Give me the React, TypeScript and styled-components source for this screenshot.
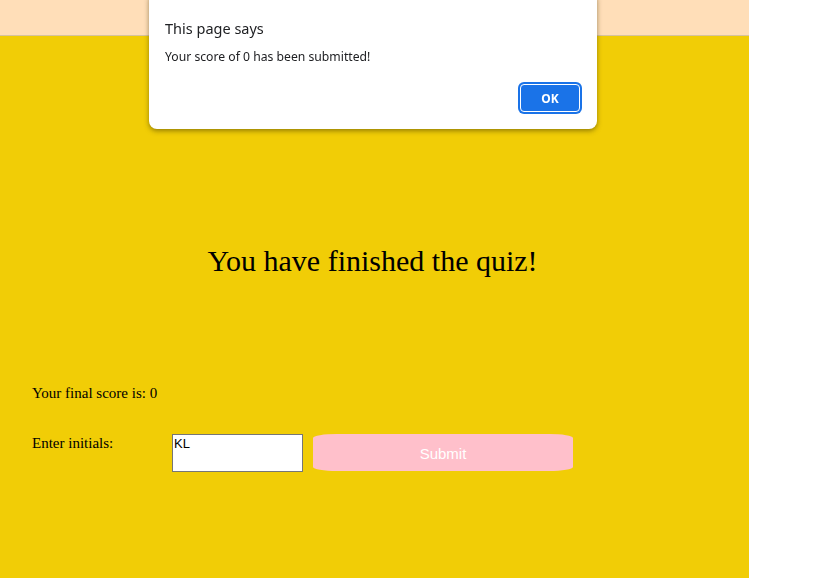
import React from "react";
import styled, { createGlobalStyle } from "styled-components";

const GlobalStyle = createGlobalStyle`
  html, body { margin: 0; padding: 0; background: #ffffff; }
  body { font-family: "Liberation Serif", "Times New Roman", serif; }
`;

const Page = styled.div`
  width: 749px;
  height: 578px;
  display: flex;
  flex-direction: column;
  overflow: hidden;
`;

const Header = styled.header`
  height: 35px;
  flex: none;
  background: #ffdeb8;
  border-bottom: 1px solid #d6c39e;
`;

const Main = styled.main`
  flex: 1;
  background: #f1cd06;
  display: flex;
  flex-direction: column;
  padding: 0 36px 0 32px;
`;

const Title = styled.h1`
  margin: 207px 0 0;
  font-size: 30px;
  font-weight: normal;
  text-align: center;
  color: #000;
  line-height: 36px;
`;

const Score = styled.p`
  margin: 105px 0 0;
  font-size: 15px;
  line-height: 18px;
  color: #000;
`;

const FormRow = styled.form`
  margin-top: 32px;
  display: flex;
  align-items: flex-start;
`;

const Label = styled.label`
  width: 140px;
  font-size: 15px;
  line-height: 18px;
  color: #000;
`;

const Initials = styled.textarea`
  box-sizing: border-box;
  width: 131px;
  height: 38px;
  margin: 0;
  padding: 1px 1px;
  border: 1px solid #767676;
  background: #fff;
  font-family: "Liberation Sans", Arial, sans-serif;
  font-size: 13px;
  line-height: 15px;
  color: #000;
  resize: none;
  outline: none;
`;

const SubmitButton = styled.button`
  box-sizing: border-box;
  width: 260px;
  height: 37px;
  margin-left: 10px;
  border: none;
  background: #ffc0cb;
  color: #ffffff;
  font-family: "Liberation Sans", Arial, sans-serif;
  font-size: 15px;
  border-radius: 24px / 4px;
  padding: 2px 0 0;
  cursor: pointer;
`;

const Dialog = styled.div`
  position: fixed;
  top: -8px;
  left: 149px;
  width: 448px;
  height: 137px;
  box-sizing: border-box;
  background: #ffffff;
  border-radius: 8px;
  box-shadow: 0 2px 5px rgba(60, 50, 0, 0.5);
  padding: 26px 16px 0;
  font-family: "Noto Sans", "Open Sans", sans-serif;
  color: #202124;
  display: flex;
  flex-direction: column;
`;

const DialogTitle = styled.div`
  font-size: 14.5px;
  line-height: 20px;
`;

const DialogMessage = styled.div`
  margin-top: 11px;
  font-size: 12.2px;
  line-height: 16px;
`;

const DialogActions = styled.div`
  margin-top: 19px;
  display: flex;
  justify-content: flex-end;
  padding-right: 1px;
`;

const OkButton = styled.button`
  box-sizing: border-box;
  width: 60px;
  height: 28px;
  padding: 0;
  background: #1a73e8;
  color: #fff;
  border: 1px solid #fff;
  box-shadow: 0 0 0 2px #1a73e8;
  border-radius: 4px;
  font-family: "Noto Sans", "Open Sans", sans-serif;
  font-weight: bold;
  font-size: 12px;
`;

export default function App() {
  return (
    <>
      <GlobalStyle />
      <Page>
        <Header />
        <Main>
          <Title>You have finished the quiz!</Title>
          <Score>Your final score is: 0</Score>
          <FormRow onSubmit={(e) => e.preventDefault()}>
            <Label htmlFor="initials">Enter initials:</Label>
            <Initials id="initials" defaultValue="KL" />
            <SubmitButton type="submit">Submit</SubmitButton>
          </FormRow>
        </Main>
      </Page>
      <Dialog role="alertdialog">
        <DialogTitle>This page says</DialogTitle>
        <DialogMessage>Your score of 0 has been submitted!</DialogMessage>
        <DialogActions>
          <OkButton>OK</OkButton>
        </DialogActions>
      </Dialog>
    </>
  );
}
